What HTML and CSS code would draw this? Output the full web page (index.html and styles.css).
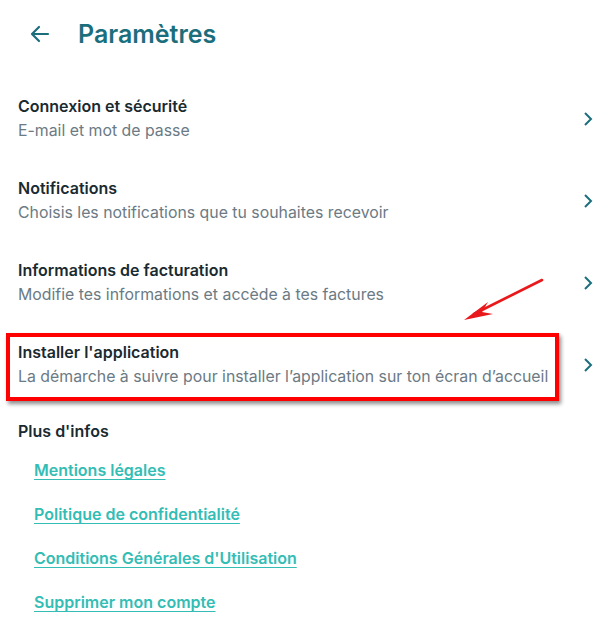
FILE: index.html
```html
<!DOCTYPE html>
<html lang="fr">
<head>
<meta charset="utf-8">
<link rel="stylesheet" href="styles.css">
</head>
<body>
<div class="page">
  <header class="header">
    <svg class="back" width="24" height="24" viewBox="0 0 24 24"><path d="M20 12H5M11 5l-7 7 7 7" fill="none" stroke="#1b6f7d" stroke-width="2.2" stroke-linecap="round" stroke-linejoin="round"/></svg>
    <h1 class="title">Paramètres</h1>
  </header>
  <ul class="list">
    <li class="item">
      <div class="text"><div class="item-title">Connexion et sécurité</div><div class="item-sub">E-mail et mot de passe</div></div>
      <svg class="chev" width="10" height="16" viewBox="0 0 10 16"><path d="M2 2l6 6-6 6" fill="none" stroke="#1b6f7d" stroke-width="2"/></svg>
    </li>
    <li class="item">
      <div class="text"><div class="item-title">Notifications</div><div class="item-sub">Choisis les notifications que tu souhaites recevoir</div></div>
      <svg class="chev" width="10" height="16" viewBox="0 0 10 16"><path d="M2 2l6 6-6 6" fill="none" stroke="#1b6f7d" stroke-width="2"/></svg>
    </li>
    <li class="item">
      <div class="text"><div class="item-title">Informations de facturation</div><div class="item-sub">Modifie tes informations et accède à tes factures</div></div>
      <svg class="chev" width="10" height="16" viewBox="0 0 10 16"><path d="M2 2l6 6-6 6" fill="none" stroke="#1b6f7d" stroke-width="2"/></svg>
    </li>
    <li class="item highlighted">
      <div class="text"><div class="item-title">Installer l'application</div><div class="item-sub">La démarche à suivre pour installer l’application sur ton écran d’accueil</div></div>
      <svg class="chev" width="10" height="16" viewBox="0 0 10 16"><path d="M2 2l6 6-6 6" fill="none" stroke="#1b6f7d" stroke-width="2"/></svg>
      <span class="mark"></span>
      <svg class="arrow" width="90" height="50" viewBox="0 0 90 50"><path d="M82 4L14 38" fill="none" stroke="#e8181b" stroke-width="2.6" stroke-linecap="round"/><path d="M4 44L28 26L22 36L33 38Z" fill="#e8181b"/></svg>
    </li>
  </ul>
  <section class="more">
    <h2 class="more-title">Plus d'infos</h2>
    <a class="link" href="#">Mentions légales</a>
    <a class="link" href="#">Politique de confidentialité</a>
    <a class="link" href="#">Conditions Générales d'Utilisation</a>
    <a class="link" href="#">Supprimer mon compte</a>
  </section>
</div>
</body>
</html>
```
FILE: styles.css
```css
* { box-sizing: border-box; }
html, body { margin: 0; padding: 0; background: #fff; }
body { font-family: Inter, "Noto Sans", sans-serif; color: #1a2a31; }
.page { width: 610px; }
.header { display: flex; align-items: center; height: 68px; padding-left: 28px; }
.back { display: block; }
.title { margin: 0 0 0 26px; font-size: 25px; font-weight: 600; color: #1b6f7d; letter-spacing: 0; }
.list { list-style: none; margin: 0; padding: 9px 0 0; }
.item { position: relative; display: flex; align-items: center; justify-content: space-between; height: 82px; padding: 0 17px 0 18px; }
.item-title { font-size: 16px; font-weight: 600; line-height: 24px; color: #1a2a31; }
.item-sub { font-size: 15.85px; font-weight: 400; line-height: 24px; color: #6b7a84; margin-top: 1px; }
.chev { display: block; margin-top: 2px; }
.mark { position: absolute; left: 6px; top: 10px; width: 553px; height: 68px; border: 4px solid #f00; box-shadow: 2px 3px 4px rgba(0,0,0,0.45); pointer-events: none; }
.arrow { position: absolute; left: 460px; top: -47px; }
.more { display: flex; flex-direction: column; align-items: flex-start; padding: 14px 0 0 18px; }
.more-title { margin: 0; font-size: 16px; font-weight: 600; line-height: 24px; color: #1a2a31; }
.link { margin: 15px 0 0 16px; font-size: 16px; font-weight: 600; line-height: 24px; color: #33bdb5; text-decoration: underline; text-underline-offset: 3px; }
.link + .link { margin-top: 20px; }
```
